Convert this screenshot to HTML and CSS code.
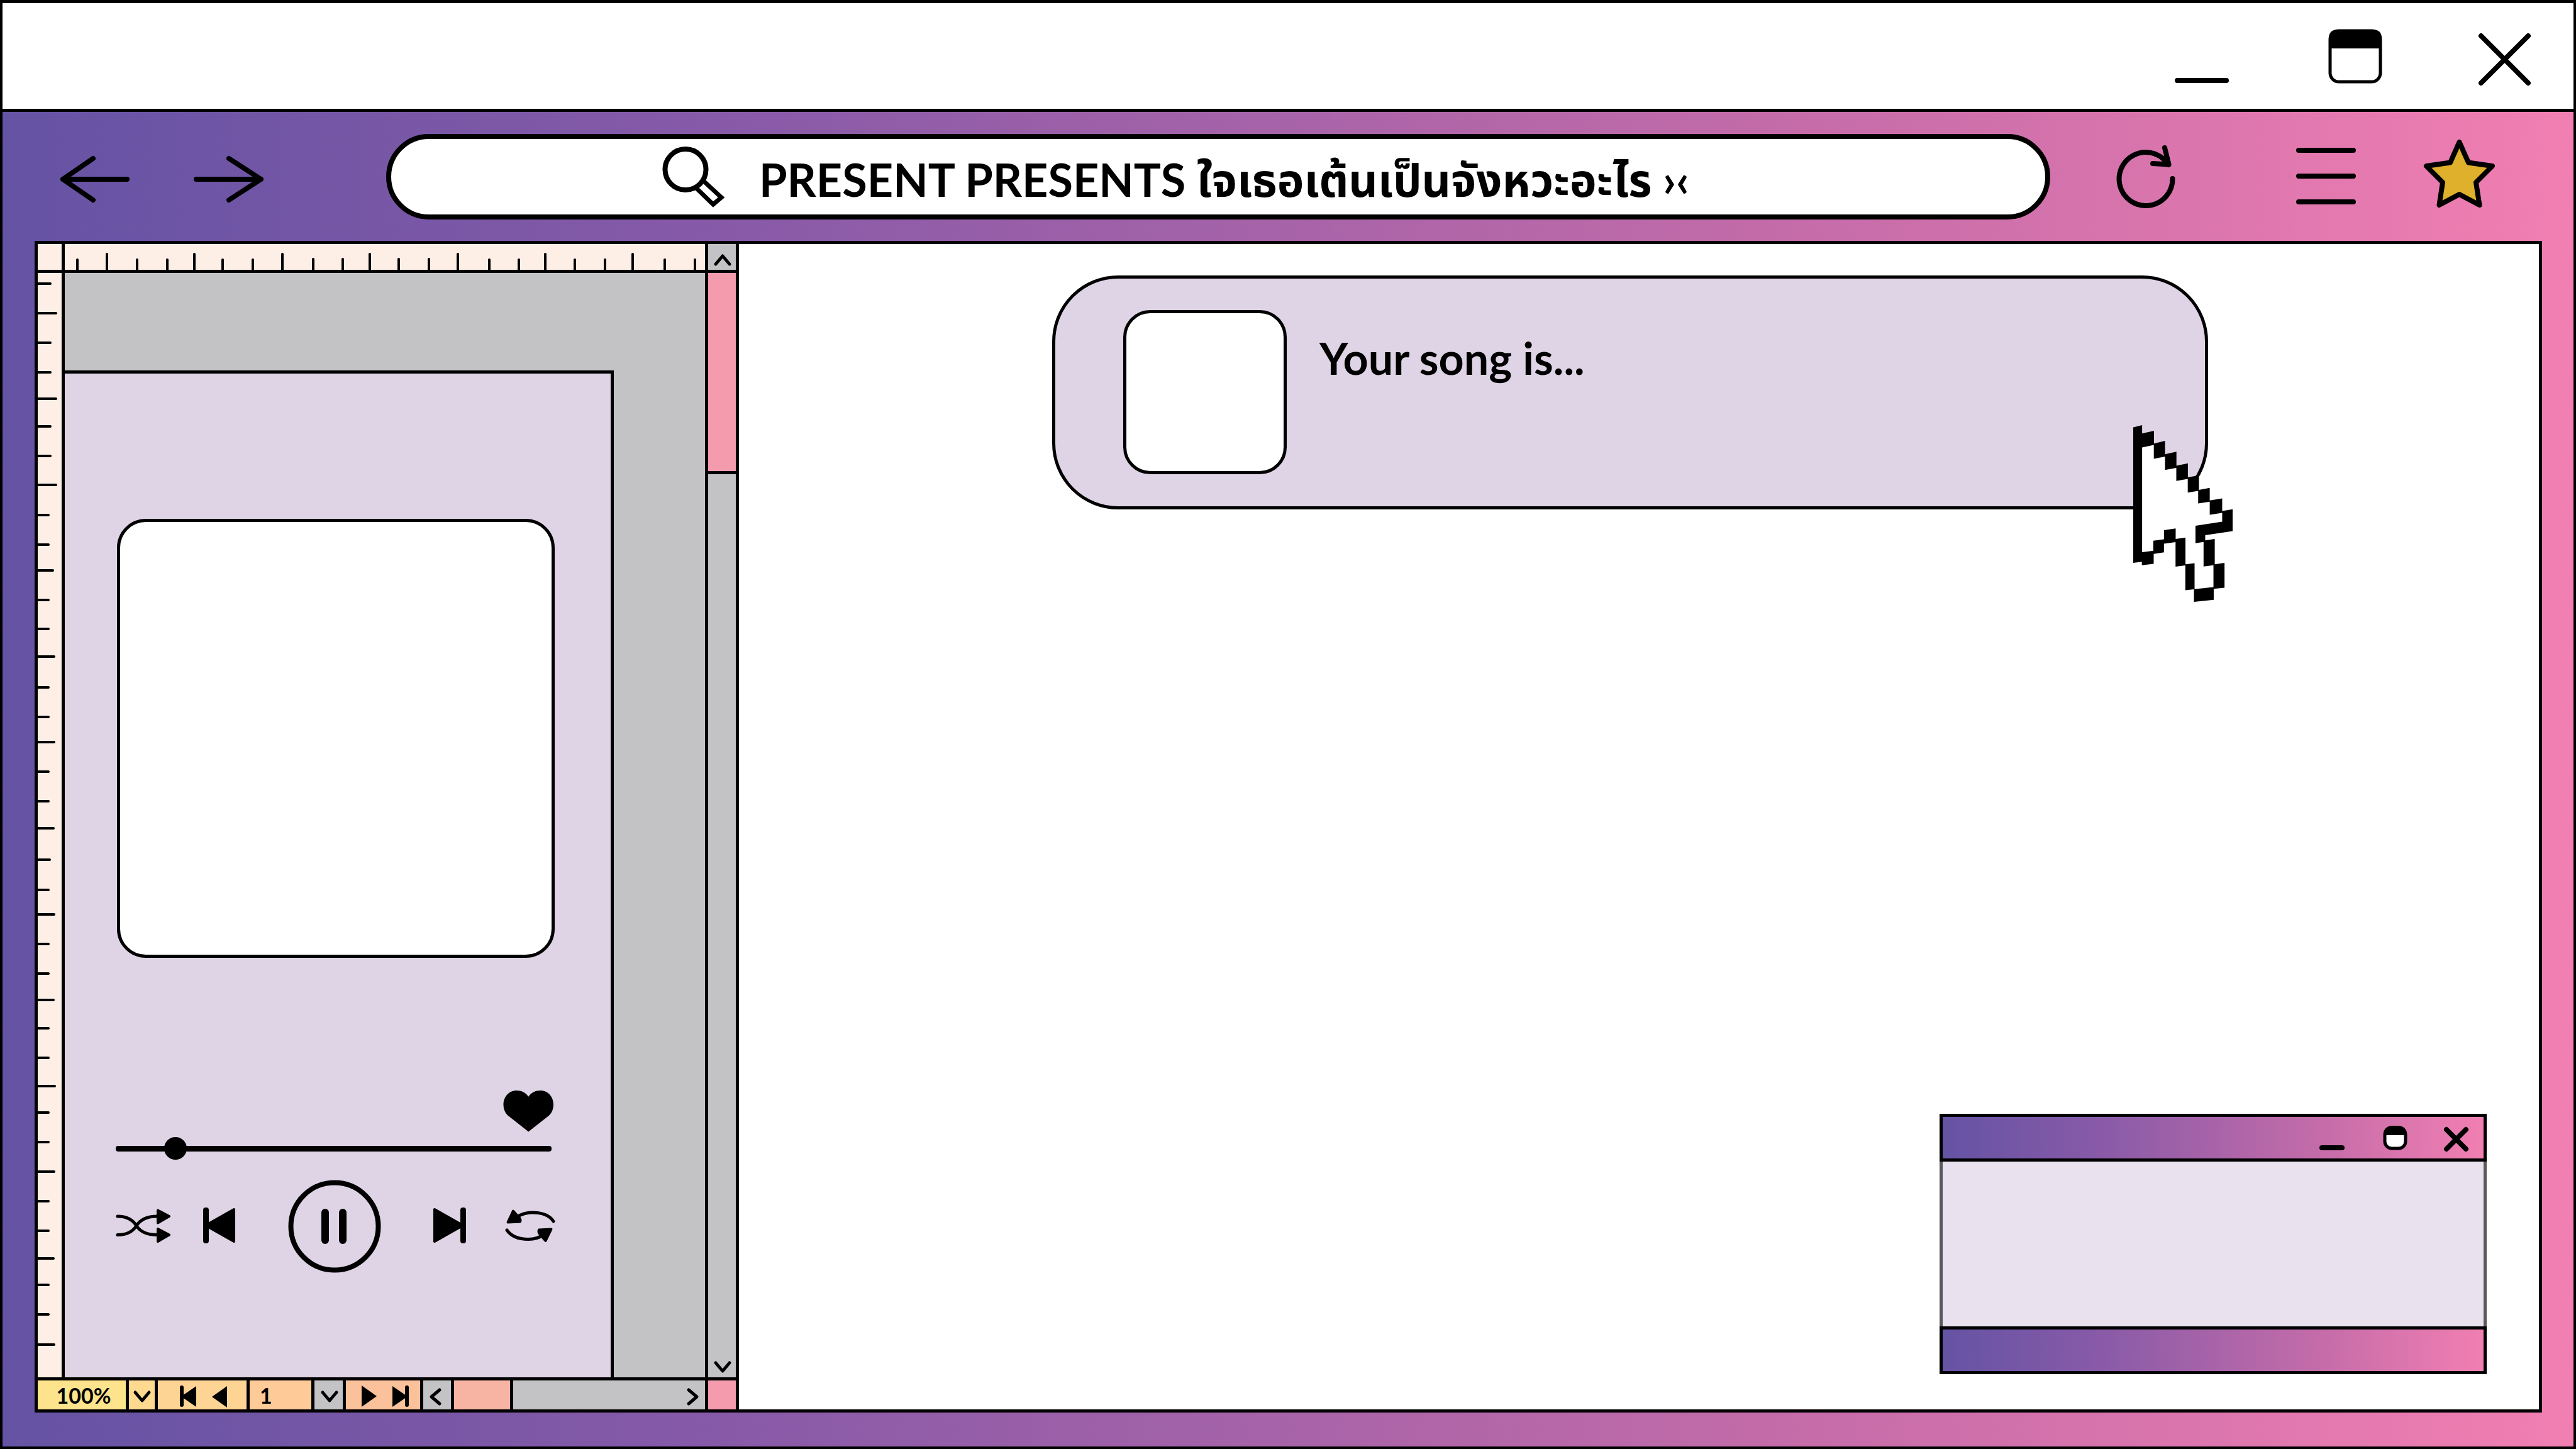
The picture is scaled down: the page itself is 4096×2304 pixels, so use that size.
FILE: index.html
```html
<!DOCTYPE html>
<html lang="th">
<head>
<meta charset="utf-8">
<title>PRESENT PRESENTS</title>
<link rel="stylesheet" href="styles.css">
</head>
<body>
<div class="window">
  <header class="titlebar">
    <button class="icon-btn" aria-label="Minimize"><svg class="icon-100" viewBox="3453 39 100 100"><path class="line" d="M3462 128H3540"/></svg></button>
    <button class="icon-btn" aria-label="Maximize"><svg class="icon-100" viewBox="3693 39 100 100"><rect class="thin" x="3705" y="49" width="80" height="81" rx="14"/><path d="M3703 77V61Q3703 47 3717 47H3773Q3787 47 3787 61V77Z"/></svg></button>
    <button class="icon-btn" aria-label="Close"><svg class="icon-100" viewBox="3933 39 100 100"><path class="line" d="M3945 57L4020 132M4020 57L3945 132"/></svg></button>
  </header>

  <nav class="toolbar">
    <button class="icon-btn" aria-label="Back"><svg class="icon-121" viewBox="90 220 121 121"><path class="line" d="M100 285H202M148 252L100 285L148 318"/></svg></button>
    <button class="icon-btn" aria-label="Forward"><svg class="icon-121" viewBox="303 220 121 121"><path class="line" d="M312 285H415M364 252L415 285L364 318"/></svg></button>
    <label class="address">
      <svg class="magnifier" viewBox="1049 227 106 108"><circle class="line" cx="1090" cy="269.500" r="32.500"/><path class="line sharp" d="M1120 289L1147 314L1134 325L1108 300"/></svg>
      <input class="address-input" type="text" aria-label="Address" value="PRESENT PRESENTS ใจเธอเต้นเป็นจังหวะอะไร ›‹">
    </label>
    <button class="icon-btn" aria-label="Reload"><svg class="icon-121" viewBox="3352 220 121 121"><path class="line" d="M3454.500 284A42.500 42.500 0 1 1 3448 262M3442 235L3448.500 261.500L3423 260"/></svg></button>
    <button class="icon-btn menu-btn" aria-label="Menu"><svg class="icon-121" viewBox="3640 220 121 121"><path class="line" d="M3655 239H3742M3655 280H3742M3655 321H3742"/></svg></button>
    <button class="icon-btn" aria-label="Bookmark"><svg class="icon-121" viewBox="3853 220 121 121"><path class="line star" d="M3910.500 226L3925 258.500L3963 264L3937 290L3942.500 326L3910.500 309L3878.500 326L3884 290L3858 264L3896 258.500Z"/></svg></button>
  </nav>

  <div class="frame">
    <aside class="editor">
      <div class="ruler-corner"></div>
      <div class="ruler-top">
        <svg viewBox="103 388 1018 41" width="1018" height="41"><path class="tick" d="M123 413V429M170 404V429M218 413V429M266 413V429M309 404V429M354 413V429M402 413V429M449 404V429M498 412V429M545 412V429M588 404V429M634 412V429M682 412V429M728 404V429M778 413V429M825 413V429M867 404V429M914 413V429M962 413V429M1006 404V429M1057 413V429M1105 413V429"/></svg>
      </div>
      <div class="ruler-side">
        <svg viewBox="60 434 38 1756" width="38" height="1756"><path class="tick" d="M58 451H80M58 498H89M58 545H80M58 592H80M58 634H89M58 678H80M58 725H80M58 771H89M58 819H77M58 866H77M58 907H84M58 954H77M58 1000H77M58 1044H86M58 1093H77M58 1140H77M58 1180H86M58 1227H77M58 1274H77M58 1317H85M58 1367H79M58 1415H77M58 1454H86M58 1501H77M58 1548H77M58 1590H85M58 1635H77M58 1682H77M58 1727H87M58 1769H77M58 1816H77M58 1863H86M58 1910H77M58 1957H77M58 2001H85M58 2043H77M58 2090H77M58 2138H86"/></svg>
      </div>
      <div class="canvas">
        <section class="player">
          <div class="cover"></div>
          <button class="icon-btn heart" aria-label="Like"><svg viewBox="800 1733 81 67" width="81" height="67"><path d="M840.300 1743.800C836 1737 829 1733.900 821.500 1733.900C809 1733.900 800.500 1744 800.500 1756.400C800.500 1763 803 1769.500 807.600 1773.700L840.300 1799.500L873 1773.700C877.600 1769.500 880 1763 880 1756.400C880 1744 871.600 1733.900 859.100 1733.900C851.600 1733.900 844.600 1737 840.300 1743.800Z"/></svg></button>
          <input class="seek" type="range" min="0" max="1000" value="117" aria-label="Seek">
          <div class="controls">
            <div class="control-group left">
              <button class="icon-btn" aria-label="Shuffle"><svg viewBox="184 1918 88 64" width="88" height="64"><path class="curve" d="M187 1934C203 1934 212 1941 217 1949C222 1957 231 1963.500 250 1963.500M187 1963.500C203 1963.500 212 1957 217 1949C222 1941 231 1934 250 1934"/><path class="solid" d="M251 1924.500L269 1934L251 1944.500ZM251 1954L269 1963.500L251 1974Z"/></svg></button>
              <button class="icon-btn" aria-label="Previous"><svg viewBox="323 1918 53 64" width="53" height="64"><rect x="323" y="1920" width="9" height="57" rx="4"/><path class="solid" d="M372 1923L327 1948.500L372 1974Z"/></svg></button>
            </div>
            <button class="icon-btn" aria-label="Pause"><svg viewBox="458 1876 148 148" width="148" height="148"><circle class="line" cx="532" cy="1950" r="69.500"/><rect x="511" y="1922" width="12" height="56" rx="6"/><rect x="539" y="1922" width="12" height="56" rx="6"/></svg></button>
            <div class="control-group right">
              <button class="icon-btn" aria-label="Next"><svg viewBox="688 1918 54 64" width="54" height="64"><rect x="732" y="1920" width="9" height="57" rx="4"/><path class="solid" d="M691 1923L736 1948.500L691 1974Z"/></svg></button>
              <button class="icon-btn" aria-label="Repeat"><svg viewBox="803 1918 81 64" width="81" height="64"><path class="curve" d="M880 1942C873 1931 860 1928 846 1928C838 1928 830 1930 822 1935M806 1956C813 1966 826 1970.500 840 1970.500C849 1970.500 858 1968 864 1963"/><path class="solid" d="M816 1925.500L807.500 1943.500L827 1942.500Q829 1939 824 1934.500ZM867.500 1973L876.500 1954.500L857 1955.500Q855 1959 860 1964.500Z"/></svg></button>
            </div>
          </div>
        </section>
      </div>
      <div class="scrollbar">
        <button class="icon-btn scroll-up" aria-label="Scroll up"><svg viewBox="1126 388 44 41" width="44" height="41"><path class="chev" d="M1138 420L1149 407L1160 420"/></svg></button>
        <div class="scroll-thumb"></div>
        <button class="icon-btn scroll-down" aria-label="Scroll down"><svg viewBox="1126 2150 44 40" width="44" height="40"><path class="chev" d="M1138 2167L1149 2180L1160 2167"/></svg></button>
      </div>
      <footer class="status">
        <input class="cell zoom-value" type="text" aria-label="Zoom" value="100%">
        <button class="cell icon-btn zoom-open" aria-label="Zoom options"><svg viewBox="205 2195 41 46" width="41" height="46"><path class="chev" d="M215 2214L226 2227L237 2214"/></svg></button>
        <div class="cell skip-back">
          <button class="icon-btn" aria-label="First page"><svg viewBox="282 2195 34 46" width="34" height="46"><rect x="286" y="2203" width="6" height="34" rx="3"/><path d="M312 2204V2237L288 2220.500Z"/></svg></button>
          <button class="icon-btn" aria-label="Previous page"><svg viewBox="334 2195 30 46" width="30" height="46"><path d="M361 2204V2238L337 2221Z"/></svg></button>
        </div>
        <input class="cell page-value" type="text" aria-label="Page" value="1">
        <button class="cell icon-btn gray" aria-label="Page options"><svg viewBox="500 2195 45 46" width="45" height="46"><path class="chev" d="M513 2214L524 2227L535 2214"/></svg></button>
        <div class="cell skip-forward">
          <button class="icon-btn" aria-label="Next page"><svg viewBox="572 2195 30 46" width="30" height="46"><path d="M575 2203V2237L599 2220Z"/></svg></button>
          <button class="icon-btn" aria-label="Last page"><svg viewBox="622 2195 30 46" width="30" height="46"><rect x="644" y="2203" width="6" height="34" rx="3"/><path d="M624 2204V2237L648 2220.500Z"/></svg></button>
        </div>
        <button class="cell icon-btn gray" aria-label="Scroll left"><svg viewBox="673 2195 44 46" width="44" height="46"><path class="chev" d="M699 2210L686 2221L699 2232"/></svg></button>
        <div class="cell hthumb"></div>
        <div class="cell gray htrack">
          <button class="icon-btn" aria-label="Scroll right"><svg viewBox="1081 2195 40 46" width="40" height="46"><path class="chev" d="M1095 2210L1108 2221L1095 2232"/></svg></button>
        </div>
        <div class="cell pink"></div>
      </footer>
    </aside>

    <main class="page">
      <section class="song">
        <div class="thumb"></div>
        <h1 class="song-title">Your song is...</h1>
        <svg class="cursor" viewBox="416 162 773 1270" preserveAspectRatio="none">
          <path class="cursor-fill" d="M450 200L484 300L576 290L663 380L751 460L840 540L922 630L1011 710L1108 790V870L976 950L964 1000L1000 1170L1050 1200V1330L900 1345L880 1330L830 1170L780 1100L760 990L655 1000L575 1080L484 1100L430 1100Z"/>
          <path d="M416 178L485 162V222L577 203V294L663 275V371L752 353V454L841 437V537L927 522V628L1011 613V703L1108 688V779L1189 767V924L976 953V990L1050 980V1162L1126 1152V1330L1042 1338V1417L888 1432V1342L821 1348V1170L745 1179V1003L655 1014V1076L575 1087V1159L483 1169V1144L416 1152ZM485 322V1075L572 1065V992L655 982V917L746 904V980L822 970V1162L893 1154V1340L1040 1326V1169L963 1178V1002L900 1010V885L1108 856V793L1011 806V712L921 725V634L840 647V548L751 563V469L663 484V388L576 404V304Z"/>
        </svg>
      </section>

      <section class="mini">
        <header class="mini-bar">
          <button class="icon-btn" aria-label="Minimize"><svg viewBox="3681 1784 50 50" width="50" height="50"><path class="line" d="M3692 1825H3724"/></svg></button>
          <button class="icon-btn" aria-label="Maximize"><svg viewBox="3781 1784 50 50" width="50" height="50"><rect class="thin white" x="3792" y="1793" width="33" height="33" rx="11"/><path d="M3790 1805Q3790 1790 3805 1790H3812Q3827 1790 3827 1805Z"/></svg></button>
          <button class="icon-btn" aria-label="Close"><svg viewBox="3881 1784 50 50" width="50" height="50"><path class="line" d="M3890 1796L3921 1827M3921 1796L3890 1827"/></svg></button>
        </header>
        <div class="mini-body"></div>
        <footer class="mini-foot"></footer>
      </section>
    </main>
  </div>
</div>
</body>
</html>
```
FILE: styles.css
```css
* { box-sizing: border-box; }

body {
  margin: 0;
  color: #000;
  font-family: "Lato", "Noto Sans", "Noto Sans Thai", sans-serif;
}

svg { display: block; }

.window {
  display: flex;
  flex-direction: column;
  min-height: 100vh;
  border: 4px solid #000;
  border-top-width: 5px;
  background: linear-gradient(90deg, #6553a4, #875aa8 28%, #c56ca9 70%, #f17fb2);
}

.icon-btn {
  display: block;
  flex: none;
  margin: 0;
  padding: 0;
  border: 0;
  background: none;
}

.icon-100 { width: 100px; height: 100px; }
.icon-121 { width: 121px; height: 121px; }

.line, .thin, .curve, .chev, .tick {
  fill: none;
  stroke: #000;
  stroke-width: 8px;
  stroke-linecap: round;
  stroke-linejoin: round;
}
.thin, .chev { stroke-width: 5px; }
.curve { stroke-width: 5px; }
.tick { stroke-width: 4px; }
.sharp { stroke-width: 7px; stroke-linejoin: miter; }
.solid { stroke: #000; stroke-width: 4px; stroke-linejoin: round; }
.star { fill: #deb02b; }
.white { fill: #fff; }

/* Title bar */
.titlebar {
  display: flex;
  align-items: center;
  justify-content: flex-end;
  gap: 140px;
  height: 173px;
  padding-right: 59px;
  border-bottom: 5px solid #000;
  background: #fff;
}

/* Navigation */
.toolbar {
  display: flex;
  align-items: center;
  gap: 92px;
  height: 205px;
  padding: 0 118px 0 86px;
}
.address {
  display: flex;
  flex: 1;
  align-items: center;
  height: 136px;
  margin-left: 98px;
  padding-left: 427px;
  border: 8px solid #000;
  border-radius: 68px;
  background: #fff;
}
.magnifier { flex: none; width: 106px; height: 108px; }
.address-input {
  flex: 1;
  min-width: 0;
  height: 120px;
  margin-left: 52px;
  padding: 20px 0 0;
  border: 0;
  background: none;
  color: #000;
  font-family: inherit;
  font-size: 72px;
  font-weight: 700;
}
.menu-btn { margin-left: 75px; }

/* Framed workspace */
.frame {
  display: flex;
  flex: 1;
  margin: 0 50px 54px 51px;
  border: 5px solid #000;
  background: #fff;
}

.editor {
  display: grid;
  flex: none;
  grid-template-columns: 43px 1018px 49px;
  grid-template-rows: 46px 1fr 51px;
  border-right: 5px solid #000;
  background: #c3c3c5;
}
.ruler-corner, .ruler-top, .ruler-side { background: #fdeee6; }
.ruler-corner, .ruler-top { border-bottom: 5px solid #000; }
.ruler-corner, .ruler-side { border-right: 5px solid #000; }
.scrollbar { grid-column: 3; grid-row: 1 / 3; }
.ruler-side, .canvas { grid-row: 2; }

.canvas { display: flex; padding-top: 155px; }
.player {
  display: flex;
  flex-direction: column;
  width: 873px;
  padding: 231px 87px 0 81px;
  border-top: 5px solid #000;
  border-right: 5px solid #000;
  background: #dfd4e5;
}
.cover {
  width: 696px;
  height: 698px;
  margin-left: 2px;
  border: 5px solid #000;
  border-radius: 46px;
  background: #fff;
}
.heart { align-self: flex-end; margin: 210px 3px 8px 0; }

.seek {
  width: 693px;
  height: 36px;
  margin: 0;
  appearance: none;
  background: none;
}
.seek::-webkit-slider-runnable-track {
  height: 9px;
  border-radius: 4px;
  background: #000;
}
.seek::-webkit-slider-thumb {
  width: 36px;
  height: 36px;
  margin-top: -14px;
  appearance: none;
  border: 0;
  border-radius: 50%;
  background: #000;
}

.controls {
  display: flex;
  align-items: center;
  justify-content: space-between;
  margin-top: 32px;
}
.control-group { display: flex; }
.left { gap: 51px; }
.right { gap: 61px; }

.scrollbar {
  display: flex;
  flex-direction: column;
  border-left: 5px solid #000;
}
.scroll-up { border-bottom: 5px solid #000; }
.scroll-thumb {
  height: 320px;
  border-bottom: 5px solid #000;
  background: #f59bae;
}
.scroll-down { margin-top: auto; }

.status {
  display: grid;
  grid-column: 1 / 4;
  grid-template-columns: 140px 46px 146px 103px 50px 123px 49px 94px 1fr 49px;
  border-top: 5px solid #000;
}
.cell {
  display: flex;
  align-items: center;
  min-width: 0;
  height: 46px;
  margin: 0;
  padding: 0;
  border: 0 solid #000;
  border-left-width: 5px;
  border-radius: 0;
  color: #000;
  font-family: inherit;
  font-size: 34px;
  font-weight: 700;
}
.zoom-value { padding-left: 6px; border-left-width: 0; background: #fde38c; text-align: center; }
.zoom-open { background: #fed990; }
.skip-back { gap: 18px; padding-left: 31px; background: #fed494; }
.page-value { padding-left: 16px; background: #fecb98; }
.skip-forward { gap: 20px; padding-left: 22px; background: #fbc19b; }
.hthumb { background: #f8b4a3; }
.htrack { justify-content: flex-end; }
.gray { background: #c3c3c5; }
.pink { background: #f59bae; }

/* Page content */
.page {
  display: flex;
  flex: 1;
  flex-direction: column;
  padding: 50px 83px 56px 498px;
}
.song {
  position: relative;
  display: flex;
  height: 372px;
  margin-right: 443px;
  padding: 50px 108px;
  border: 5px solid #000;
  border-radius: 105px;
  background: #dfd4e5;
}
.thumb {
  flex: none;
  width: 260px;
  height: 261px;
  border: 5px solid #000;
  border-radius: 43px;
  background: #fff;
}
.song-title {
  margin: 36px 0 0 52px;
  font-size: 70px;
  font-weight: 700;
  line-height: 80px;
}
.cursor {
  position: absolute;
  top: 233px;
  right: -44px;
  width: 158px;
  height: 281px;
}
.cursor-fill { fill: #fff; }

.mini {
  display: flex;
  flex-direction: column;
  align-self: flex-end;
  width: 870px;
  margin-top: auto;
}
.mini-bar, .mini-foot {
  border: 5px solid #000;
  background: linear-gradient(90deg, #6553a4, #875aa8 28%, #c56ca9 70%, #f17fb2);
}
.mini-bar {
  display: flex;
  align-items: center;
  justify-content: flex-end;
  gap: 50px;
  height: 76px;
  padding-right: 18px;
}
.mini-body {
  height: 262px;
  border: 0 solid #59595b;
  border-width: 0 5px;
  background: #e9e2ee;
}
.mini-foot { height: 76px; }
```
